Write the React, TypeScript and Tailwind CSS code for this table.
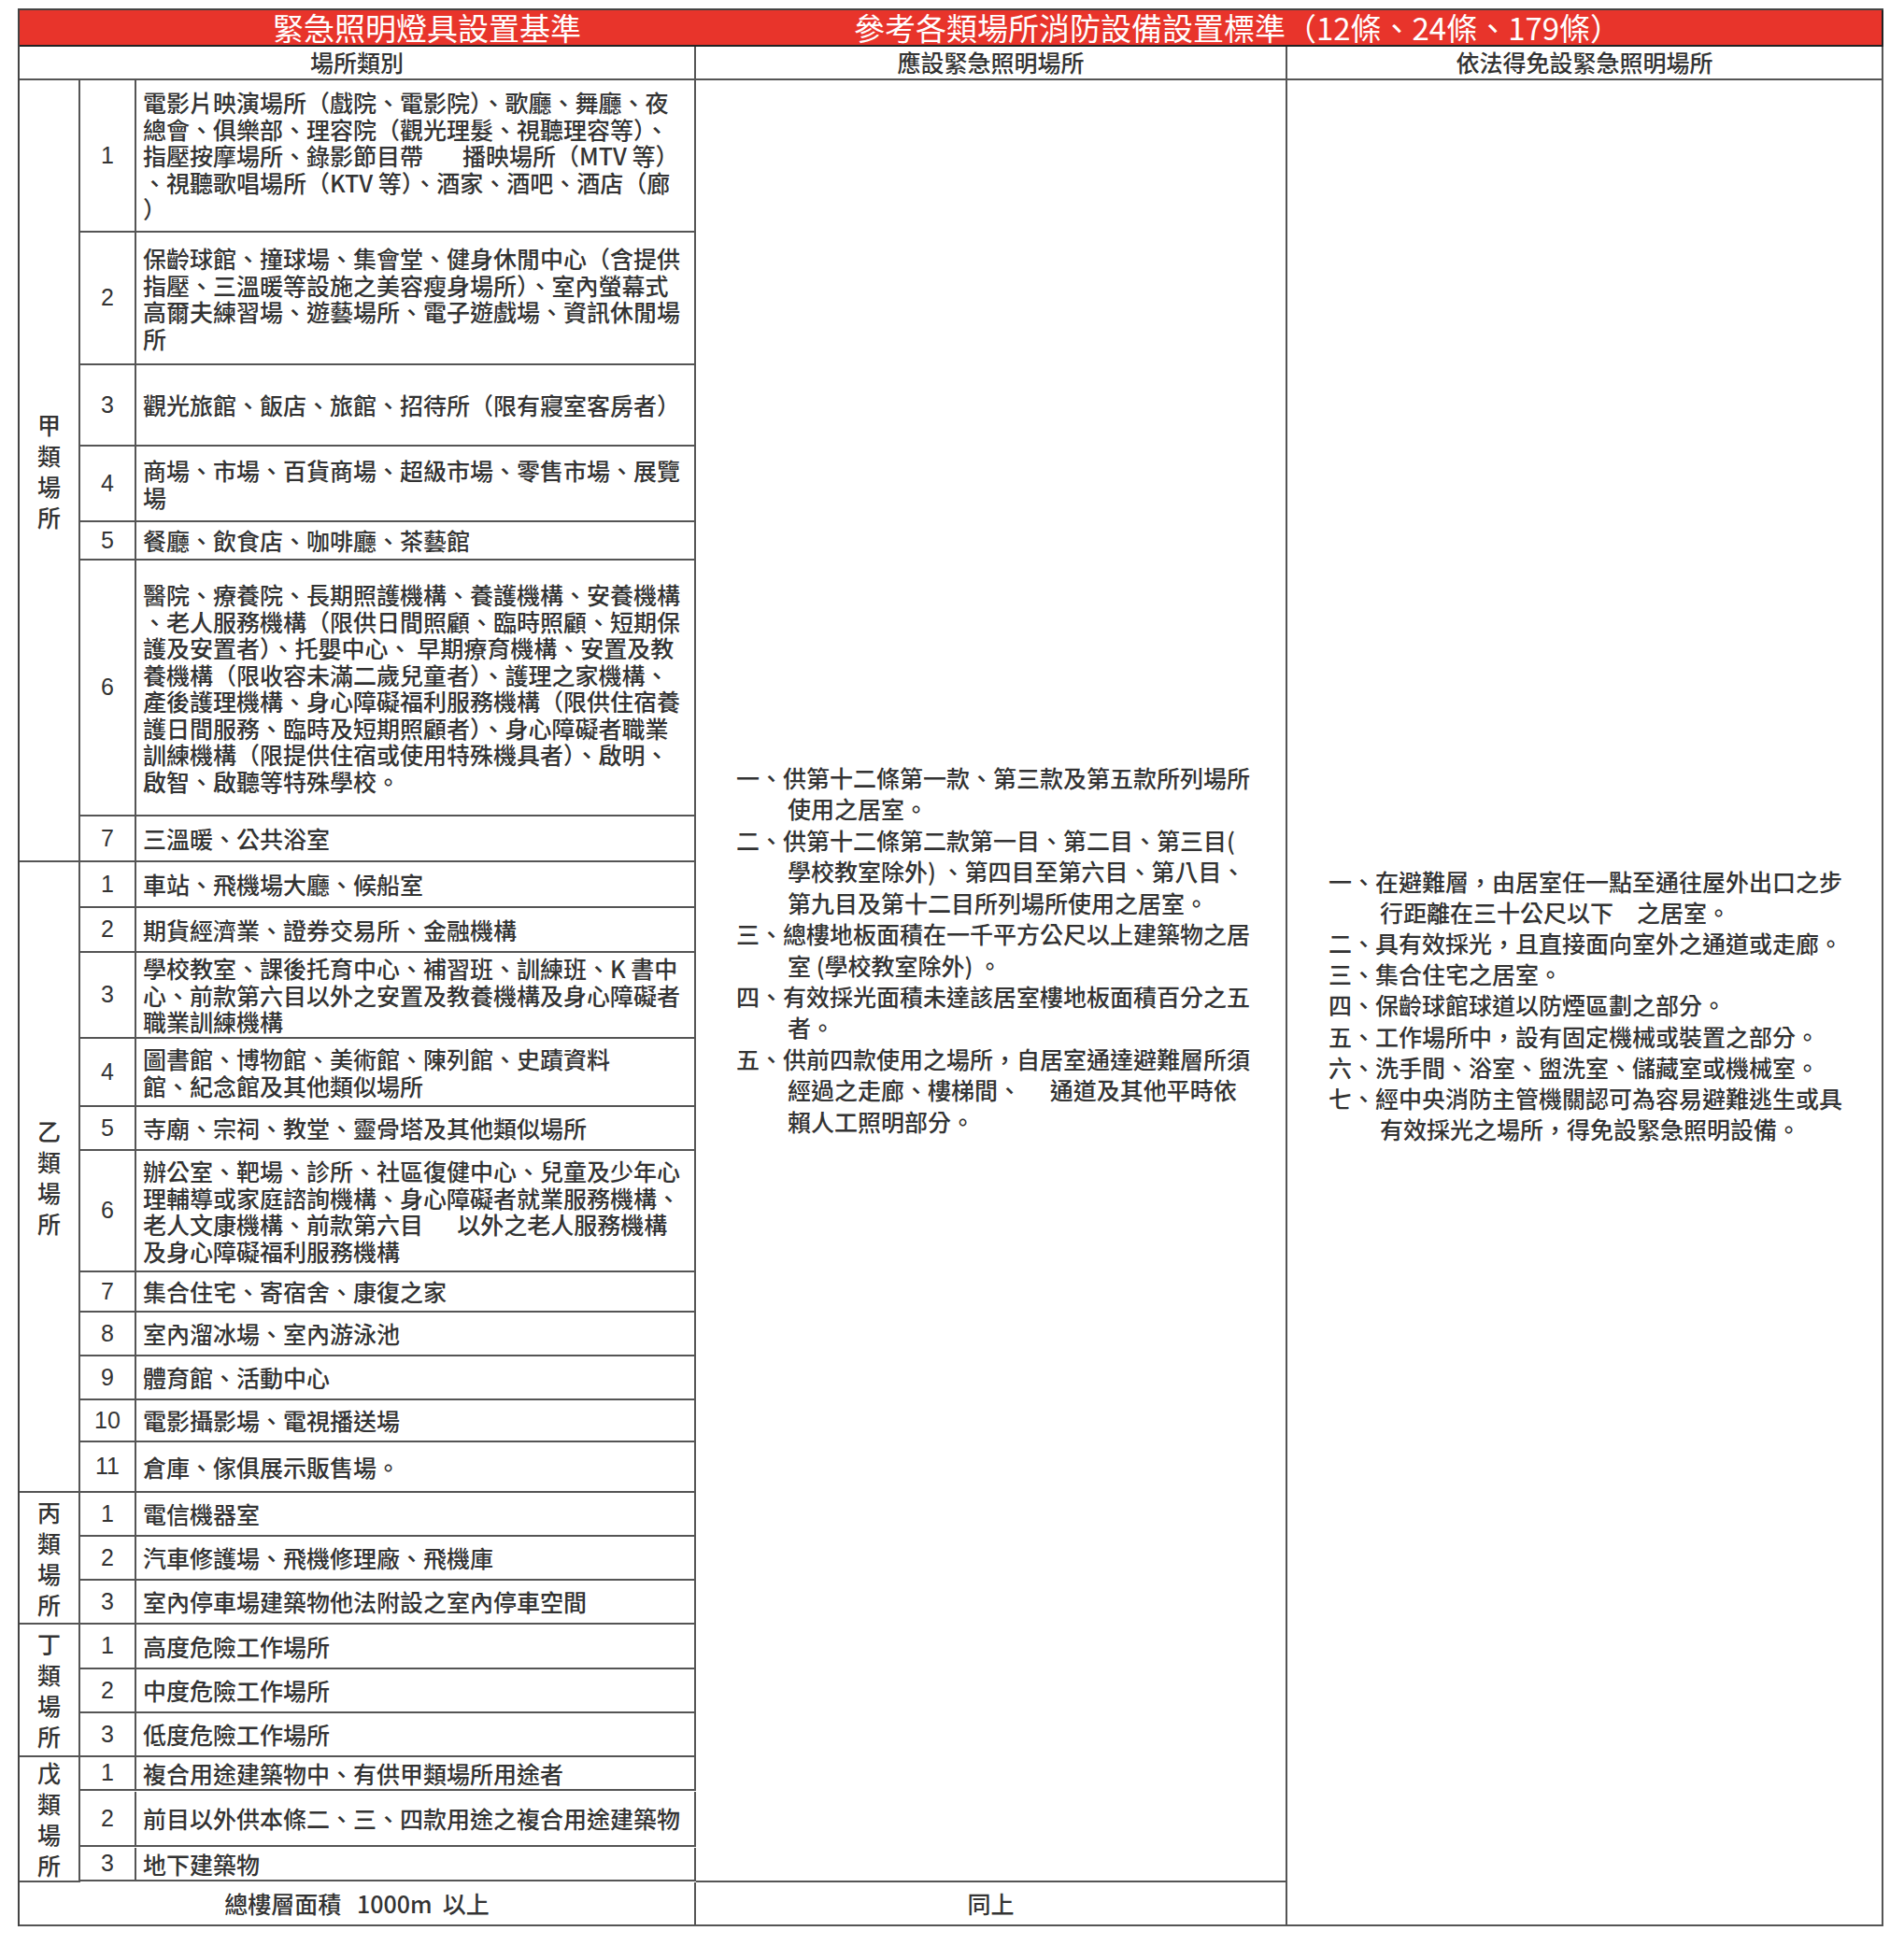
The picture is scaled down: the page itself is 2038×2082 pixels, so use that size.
import React from "react";

type Row = { n: string; h: string; lines: string[] };
type Group = { label: string; span: string; rows: Row[] };

const groups: Group[] = [
  {
    label: "甲類場所",
    span: "row-span-7",
    rows: [
      {
        n: "1",
        h: "h-[163px]",
        lines: [
          "電影片映演場所（戲院、電影院）、歌廳、舞廳、夜",
          "總會、俱樂部、理容院（觀光理髮、視聽理容等）、",
          "指壓按摩場所、錄影節目帶　   播映場所（MTV 等）",
          "、視聽歌唱場所（KTV 等）、酒家、酒吧、酒店（廊",
          "）",
        ],
      },
      {
        n: "2",
        h: "h-[142px]",
        lines: [
          "保齡球館、撞球場、集會堂、健身休閒中心（含提供",
          "指壓、三溫暖等設施之美容瘦身場所）、室內螢幕式",
          "高爾夫練習場、遊藝場所、電子遊戲場、資訊休閒場",
          "所",
        ],
      },
      { n: "3", h: "h-[87px]", lines: ["觀光旅館、飯店、旅館、招待所（限有寢室客房者）"] },
      {
        n: "4",
        h: "h-[81px]",
        lines: ["商場、市場、百貨商場、超級市場、零售市場、展覽", "場"],
      },
      { n: "5", h: "h-[41px]", lines: ["餐廳、飲食店、咖啡廳、茶藝館"] },
      {
        n: "6",
        h: "h-[274px]",
        lines: [
          "醫院、療養院、長期照護機構、養護機構、安養機構",
          "、老人服務機構（限供日間照顧、臨時照顧、短期保",
          "護及安置者）、托嬰中心、 早期療育機構、安置及教",
          "養機構（限收容未滿二歲兒童者）、護理之家機構、",
          "產後護理機構、身心障礙福利服務機構（限供住宿養",
          "護日間服務、臨時及短期照顧者）、身心障礙者職業",
          "訓練機構（限提供住宿或使用特殊機具者）、啟明、",
          "啟智、啟聽等特殊學校。",
        ],
      },
      { n: "7", h: "h-[49px]", lines: ["三溫暖、公共浴室"] },
    ],
  },
  {
    label: "乙類場所",
    span: "row-span-11",
    rows: [
      { n: "1", h: "h-[49px]", lines: ["車站、飛機場大廳、候船室"] },
      { n: "2", h: "h-[48px]", lines: ["期貨經濟業、證券交易所、金融機構"] },
      {
        n: "3",
        h: "h-[92px]",
        lines: [
          "學校教室、課後托育中心、補習班、訓練班、K 書中",
          "心、前款第六目以外之安置及教養機構及身心障礙者",
          "職業訓練機構",
        ],
      },
      {
        n: "4",
        h: "h-[73px]",
        lines: ["圖書館、博物館、美術館、陳列館、史蹟資料", "館、紀念館及其他類似場所"],
      },
      { n: "5", h: "h-[47px]", lines: ["寺廟、宗祠、教堂、靈骨塔及其他類似場所"] },
      {
        n: "6",
        h: "h-[130px]",
        lines: [
          "辦公室、靶場、診所、社區復健中心、兒童及少年心",
          "理輔導或家庭諮詢機構、身心障礙者就業服務機構、",
          "老人文康機構、前款第六目　  以外之老人服務機構",
          "及身心障礙福利服務機構",
        ],
      },
      { n: "7", h: "h-[43px]", lines: ["集合住宅、寄宿舍、康復之家"] },
      { n: "8", h: "h-[47px]", lines: ["室內溜冰場、室內游泳池"] },
      { n: "9", h: "h-[47px]", lines: ["體育館、活動中心"] },
      { n: "10", h: "h-[45px]", lines: ["電影攝影場、電視播送場"] },
      { n: "11", h: "h-[54px]", lines: ["倉庫、傢俱展示販售場。"] },
    ],
  },
  {
    label: "丙類場所",
    span: "row-span-3",
    rows: [
      { n: "1", h: "h-[47px]", lines: ["電信機器室"] },
      { n: "2", h: "h-[47px]", lines: ["汽車修護場、飛機修理廠、飛機庫"] },
      { n: "3", h: "h-[47px]", lines: ["室內停車場建築物他法附設之室內停車空間"] },
    ],
  },
  {
    label: "丁類場所",
    span: "row-span-3",
    rows: [
      { n: "1", h: "h-[48px]", lines: ["高度危險工作場所"] },
      { n: "2", h: "h-[47px]", lines: ["中度危險工作場所"] },
      { n: "3", h: "h-[47px]", lines: ["低度危險工作場所"] },
    ],
  },
  {
    label: "戊類場所",
    span: "row-span-3",
    rows: [
      { n: "1", h: "h-[36px]", lines: ["複合用途建築物中、有供甲類場所用途者"] },
      { n: "2", h: "h-[59px]", lines: ["前目以外供本條二、三、四款用途之複合用途建築物"] },
      { n: "3", h: "h-[36px]", lines: ["地下建築物"] },
    ],
  },
];

// 應設緊急照明場所
const required = [
  ["一、供第十二條第一款、第三款及第五款所列場所", "使用之居室。"],
  [
    "二、供第十二條第二款第一目、第二目、第三目(",
    "學校教室除外) 、第四目至第六目、第八目、",
    "第九目及第十二目所列場所使用之居室。",
  ],
  ["三、總樓地板面積在一千平方公尺以上建築物之居", "室 (學校教室除外) 。"],
  ["四、有效採光面積未達該居室樓地板面積百分之五", "者。"],
  [
    "五、供前四款使用之場所，自居室通達避難層所須",
    "經過之走廊、樓梯間、　 通道及其他平時依",
    "賴人工照明部分。",
  ],
];

// 依法得免設緊急照明場所
const exempt = [
  ["一、在避難層，由居室任一點至通往屋外出口之步", "行距離在三十公尺以下　之居室。"],
  ["二、具有效採光，且直接面向室外之通道或走廊。"],
  ["三、集合住宅之居室。"],
  ["四、保齡球館球道以防煙區劃之部分。"],
  ["五、工作場所中，設有固定機械或裝置之部分。"],
  ["六、洗手間、浴室、盥洗室、儲藏室或機械室。"],
  ["七、經中央消防主管機關認可為容易避難逃生或具", "有效採光之場所，得免設緊急照明設備。"],
];

const cell = "border-r-2 border-b-2 border-[#555]";

function ItemList({ items }: { items: string[][] }) {
  return (
    <>
      {items.map((item, i) =>
        item.map((line, j) => (
          <div key={`${i}-${j}`} className={`whitespace-pre ${j > 0 ? "pl-[55px]" : ""}`}>
            {line}
          </div>
        ))
      )}
    </>
  );
}

export default function App() {
  return (
    <div className="min-h-[2082px] w-[2038px] bg-white pl-[19px] pt-[9px] font-['Noto_Sans_CJK_TC',sans-serif] font-medium text-[25px] text-[#333]">
      <div className="grid w-max grid-cols-[65px_60px_599px_633px_638px] border-l-2 border-t-2 border-[#444]">
        {/* 紅色標題列 */}
        <div className="col-span-3 flex h-[39px] items-center justify-center border-b-2 border-[#222] bg-[#e8342b] pl-[148px] text-[33px] font-normal leading-none text-white">
          緊急照明燈具設置基準
        </div>
        <div className="col-span-2 flex h-[39px] items-center justify-center border-b-2 border-r-2 border-[#222] bg-[#e8342b] pr-[110px] text-[33px] font-normal leading-none text-white">
          參考各類場所消防設備設置標準（12條、24條、179條）
        </div>

        {/* 欄位標題 */}
        <div className={`col-span-3 flex h-[36px] items-center justify-center ${cell}`}>場所類別</div>
        <div className={`flex h-[36px] items-center justify-center ${cell}`}>應設緊急照明場所</div>
        <div className={`flex h-[36px] items-center justify-center ${cell}`}>依法得免設緊急照明場所</div>

        {groups.map((g, gi) =>
          g.rows.map((r, ri) => (
            <React.Fragment key={`${gi}-${ri}`}>
              {ri === 0 && (
                <div className={`${g.span} flex flex-col items-center justify-center ${cell}`}>
                  {g.label.split("").map((c, ci) => (
                    <div key={ci} className="leading-[33px]">
                      {c}
                    </div>
                  ))}
                </div>
              )}
              <div
                className={`${r.h} flex items-center justify-center font-['Liberation_Sans',sans-serif] font-normal ${cell}`}
              >
                {r.n}
              </div>
              <div className={`${r.h} flex flex-col justify-center pl-[7px] leading-[28.5px] ${cell}`}>
                {r.lines.map((l, li) => (
                  <div key={li} className="whitespace-pre">
                    {l}
                  </div>
                ))}
              </div>
              {gi === 0 && ri === 0 && (
                <>
                  <div className={`row-span-[27] flex flex-col justify-center pb-[66px] pl-[43px] leading-[33.4px] ${cell}`}>
                    <ItemList items={required} />
                  </div>
                  <div className={`row-span-[28] flex flex-col justify-center pl-[44px] pt-[6px] leading-[33.2px] ${cell}`}>
                    <ItemList items={exempt} />
                  </div>
                </>
              )}
            </React.Fragment>
          ))
        )}

        {/* 總樓層面積 */}
        <div className={`col-span-3 flex h-[47px] items-center justify-center whitespace-pre ${cell}`}>
          總樓層面積   1000m  以上
        </div>
        <div className={`flex h-[47px] items-center justify-center ${cell}`}>同上</div>
      </div>
    </div>
  );
}
